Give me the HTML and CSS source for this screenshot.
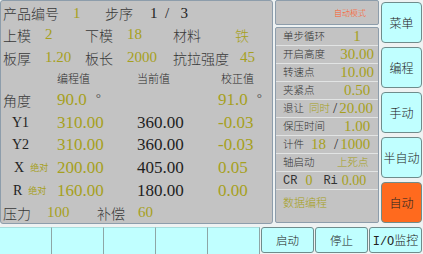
FILE: index.html
```html
<!DOCTYPE html>
<html lang="zh">
<head>
<meta charset="UTF-8">
<title>折弯机 自动模式</title>
<link rel="stylesheet" href="styles.css">
</head>
<body>

<div class="screen">
    <div class="main">

        <!-- program / axis values -->
        <div class="left">
            <div class="irow r1">
                <span class="lb c70">产品编号</span><span class="num c32">1</span><span class="lb c45">步序</span><span class="step">1&nbsp;&nbsp;/&nbsp;&nbsp;&nbsp;3</span>
            </div>
            <div class="irow r2">
                <span class="lb">上模</span><span class="num">2</span><span class="lb">下模</span><span class="num">18</span><span class="lb">材料</span><span class="lb olive iron">铁</span>
            </div>
            <div class="irow r3">
                <span class="lb">板厚</span><span class="num">1.20</span><span class="lb">板长</span><span class="num">2000</span><span class="lb">抗拉强度</span><span class="num">45</span>
            </div>

            <div class="tbl">
                <span></span><span class="hd">编程值</span><span class="hd">当前值</span><span class="hd hd4">校正值</span>

                <span class="lb">角度</span><span class="big">90.0<span class="deg">°</span></span><span></span><span class="big">91.0<span class="deg">°</span></span>

                <span class="ax">Y1</span><span class="big">310.00</span><span class="big cur">360.00</span><span class="big">-0.03</span>

                <span class="ax">Y2</span><span class="big">310.00</span><span class="big cur">360.00</span><span class="big">-0.03</span>

                <span class="ax ax-x">X<em>绝对</em></span><span class="big">200.00</span><span class="big cur">405.00</span><span class="big">0.05</span>

                <span class="ax ax-r">R<em>绝对</em></span><span class="big">160.00</span><span class="big cur">180.00</span><span class="big">0.00</span>
            </div>

            <div class="irow r4">
                <span class="lb">压力</span><span class="num p100">100</span><span class="lb">补偿</span><span class="num">60</span>
            </div>
        </div>

        <!-- auto parameters -->
        <div class="mid">
            <div class="mode">自动模式</div>
            <div class="list">
                <div class="li"><span class="ml">单步循环</span><span class="mv">1</span></div>
                <div class="li"><span class="ml">开启高度</span><span class="mv">30.00</span></div>
                <div class="li"><span class="ml">转速点</span><span class="mv">10.00</span></div>
                <div class="li"><span class="ml">夹紧点</span><span class="mv">0.50</span></div>
                <div class="li"><span class="ml">退让</span><em class="tag">同时</em><span class="sl">/</span><span class="mv2">20.00</span></div>
                <div class="li"><span class="ml">保压时间</span><span class="mv">1.00</span></div>
                <div class="li"><span class="ml">计件</span><span class="cnt">18</span><span class="sl">/</span><span class="mv2">1000</span></div>
                <div class="li"><span class="ml">轴启动</span><em class="tag top">上死点</em></div>
                <div class="li"><span class="code">CR</span><span class="cv">0</span><span class="code">Ri</span><span class="cv">0.00</span></div>
                <div class="li last"><span class="data">数据编程</span></div>
            </div>
        </div>

        <!-- side keys -->
        <div class="keys">
            <div class="key">菜单</div>
            <div class="key">编程</div>
            <div class="key">手动</div>
            <div class="key">半自动</div>
            <div class="key on">自动</div>
        </div>
    </div>

    <div class="bar">
        <div class="cell"></div>
        <div class="cell"></div>
        <div class="cell"></div>
        <div class="cell"></div>
        <div class="cell"></div>
        <div class="cell btn">启动</div>
        <div class="cell btn">停止</div>
        <div class="cell btn io">I/O监控</div>
    </div>
</div>

</body>
</html>
```

FILE: styles.css
```css
/* HMI screen, 423 x 254 */
* {
    box-sizing: border-box;
}
body {
    margin: 0;
    width: 423px;
    height: 254px;
    overflow: hidden;
    background: #eef2f2;
    color: #333;
    font-family: "Noto Sans CJK SC", sans-serif;
    font-weight: 300;
}
em {
    font-style: normal;
}
.screen {
    display: flex;
    flex-direction: column;
    height: 254px;
}
.main {
    display: flex;
    height: 227px;
}

/* left panel */
.left {
    width: 273px;
    height: 224px;
    padding: 1px 0 0 2px;
    background: #c3c3c3;
    border: 1px solid #8d9dab;
    border-radius: 3px;
}
.irow {
    display: flex;
    align-items: center;
}
.r1 { height: 22px; }
.r2 { height: 21px; }
.r3 { height: 25px; }
.r4 { height: 21px; }
.lb {
    font-size: 14px;
    line-height: 1;
    color: #383838;
}
.num, .big, .step {
    font-family: "Liberation Serif", serif;
    font-weight: 400;
    line-height: 1;
    color: #a6a020;
}
.num { font-size: 15px; }
.step {
    font-size: 15px;
    color: #222;
}
.olive { color: #a6a020; }
.c70 { width: 70px; }
.c32 { width: 32px; }
.c45 { width: 45px; }
.r2 span:nth-child(1), .r3 span:nth-child(1),
.r2 span:nth-child(3), .r3 span:nth-child(3) { width: 42px; }
.r2 span:nth-child(2), .r3 span:nth-child(2) { width: 40px; }
.r2 span:nth-child(4), .r3 span:nth-child(4) { width: 46px; }
.r2 span:nth-child(5), .r3 span:nth-child(5) { width: 67px; }
.iron { margin-left: -5px; }

.r4 .lb:first-child { width: 44px; }
.p100 { width: 50px; }
.r4 .lb:nth-child(3) { width: 41px; }

.tbl {
    display: grid;
    grid-template-columns: 54px 80px 81px 1fr;
    grid-template-rows: 17px 25px 21px 23px 23px 23px;
    align-items: center;
}
.hd {
    font-size: 11px;
    line-height: 1;
    color: #2a2a2a;
}
.hd4 { padding-left: 3px; }
.big { font-size: 17px; }
.cur { color: #1e1e1e; }
.deg {
    margin-left: 9px;
    font-size: 13px;
    vertical-align: 3px;
    color: #555;
}
.ax {
    padding-left: 9px;
    font-family: "Liberation Serif", serif;
    font-weight: 400;
    font-size: 14px;
    line-height: 1;
    color: #222;
}
.ax-x { padding-left: 11px; }
.ax-r { padding-left: 10px; }
.ax em {
    margin-left: 6px;
    font-family: "Noto Sans CJK SC", sans-serif;
    font-size: 9px;
    color: #a6a020;
    vertical-align: 1px;
}

/* middle panel */
.mid {
    width: 104px;
    margin-left: 2px;
}
.mode {
    height: 25px;
    padding-right: 12px;
    text-align: right;
    font-size: 8px;
    line-height: 23px;
    color: #ff5a28;
    background: #c3c3c3;
    border: 1px solid #8d9dab;
    border-radius: 2px;
}
.list {
    height: 196px;
    margin-top: 2px;
    background: #c3c3c3;
    border: 1px solid #8d9dab;
    border-radius: 2px;
}
.li {
    display: flex;
    align-items: center;
    height: 18px;
    padding-left: 7px;
    border-bottom: 1px solid #e2e4e4;
}
.li.last {
    height: 32px;
    align-items: flex-start;
    padding-top: 3px;
    border-bottom: 0;
}
.ml {
    width: 53px;
    font-size: 10.5px;
    line-height: 1;
    color: #333;
}
.mv {
    flex: 1;
    text-align: center;
    font-family: "Liberation Serif", serif;
    font-weight: 400;
    font-size: 15px;
    line-height: 1;
    color: #a6a020;
}
.li .ml:has(+ .tag) { width: 26px; }
.li .ml:has(+ .cnt) { width: 28px; }
.tag {
    font-size: 10.5px;
    line-height: 1;
    color: #a6a020;
}
.li .ml:has(+ .tag.top) { width: 54px; }
.sl {
    margin: 0 2px 0 3px;
    font-family: "Liberation Serif", serif;
    font-weight: 400;
    font-size: 15px;
    line-height: 1;
    color: #333;
}
.cnt {
    width: 20px;
    font-family: "Liberation Serif", serif;
    font-weight: 400;
    font-size: 15px;
    line-height: 1;
    color: #a6a020;
}
.mv2 {
    font-family: "Liberation Serif", serif;
    font-weight: 400;
    font-size: 15px;
    line-height: 1;
    color: #a6a020;
}
.code {
    font-family: "Liberation Mono", monospace;
    font-weight: 400;
    font-size: 12px;
    line-height: 1;
    color: #333;
}
.cv {
    margin: 0 11px 0 8px;
    font-family: "Liberation Serif", serif;
    font-weight: 400;
    font-size: 14px;
    line-height: 1;
    color: #a6a020;
}
.cv + .code + .cv { margin-left: 4px; }
.data {
    font-size: 11px;
    line-height: 18px;
    color: #a6a020;
}

/* side keys */
.keys {
    display: flex;
    flex-direction: column;
    gap: 4px;
    width: 41px;
    height: 223px;
    margin-left: 2px;
    padding-top: 2px;
}
.key {
    flex: 1;
    display: flex;
    align-items: center;
    justify-content: center;
    font-size: 12px;
    color: #222;
    background: #c0ffff;
    border: 1px solid #6f8c8c;
    border-radius: 4px;
}
.key.on {
    background: #ff6a1e;
}

/* bottom bar */
.bar {
    display: flex;
    height: 27px;
}
.cell {
    flex: 1;
    background: #c0ffff;
    border-top: 1px solid #a6dede;
    border-right: 1px solid #8ea6a6;
}
.cell.btn {
    display: flex;
    align-items: center;
    justify-content: center;
    margin-left: 1px;
    margin-bottom: 1px;
    font-size: 11.5px;
    color: #222;
    border: 1px solid #6f8c8c;
    border-radius: 3px;
}
.cell.io {
    font-family: "Liberation Mono", "Noto Sans CJK SC", monospace;
    font-size: 12px;
    margin-right: 1px;
}
```
